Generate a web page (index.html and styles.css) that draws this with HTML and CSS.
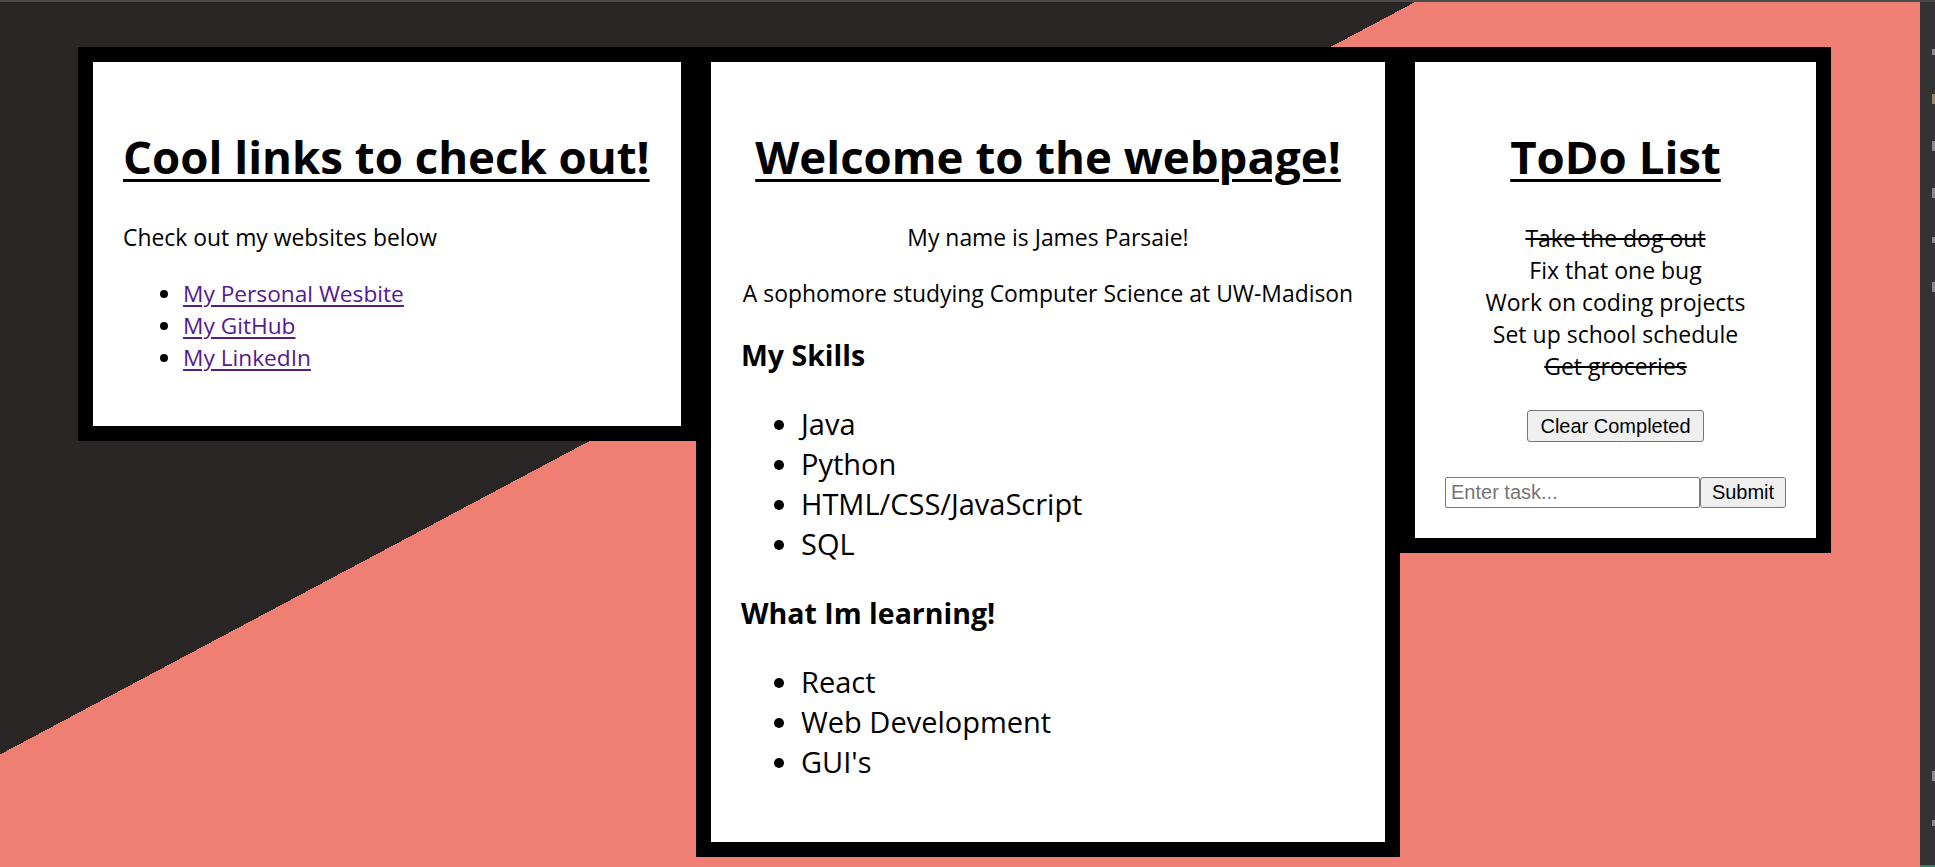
FILE: index.html
```html
<!DOCTYPE html>
<html lang="en">
<head>
<meta charset="utf-8">
<title>James Parsaie</title>
<link rel="stylesheet" href="styles.css">
</head>
<body>
<div class="topline"></div>
<div class="frame">
  <main class="stage">
    <section class="card card-links">
      <h1 class="title">Cool links to check out!</h1>
      <p class="text">Check out my websites below</p>
      <ul class="links">
        <li><a class="link" href="#">My Personal Wesbite</a></li>
        <li><a class="link" href="#">My GitHub</a></li>
        <li><a class="link" href="#">My LinkedIn</a></li>
      </ul>
    </section>

    <section class="card card-welcome">
      <h1 class="title title-center">Welcome to the webpage!</h1>
      <p class="text text-center">My name is James Parsaie!</p>
      <p class="text text-center">A sophomore studying Computer Science at UW-Madison</p>
      <h3 class="subtitle">My Skills</h3>
      <ul class="big-list">
        <li>Java</li>
        <li>Python</li>
        <li>HTML/CSS/JavaScript</li>
        <li>SQL</li>
      </ul>
      <h3 class="subtitle">What Im learning!</h3>
      <ul class="big-list">
        <li>React</li>
        <li>Web Development</li>
        <li>GUI's</li>
      </ul>
    </section>

    <section class="card card-todo">
      <h1 class="title title-center">ToDo List</h1>
      <ul class="todo-list">
        <li class="todo done">Take the dog out</li>
        <li class="todo">Fix that one bug</li>
        <li class="todo">Work on coding projects</li>
        <li class="todo">Set up school schedule</li>
        <li class="todo done">Get groceries</li>
      </ul>
      <button class="btn btn-clear" type="button">Clear Completed</button>
      <form class="add-row">
        <input class="task-input" type="text" placeholder="Enter task...">
        <button class="btn btn-submit" type="button">Submit</button>
      </form>
    </section>
  </main>
  <aside class="sidebar">
    <div class="side-top">
      <span class="side-mark side-mark-small"></span>
      <span class="side-mark side-mark-warm"></span>
      <span class="side-mark"></span>
      <span class="side-mark"></span>
      <span class="side-mark side-mark-small"></span>
      <span class="side-mark"></span>
    </div>
    <div class="side-bottom">
      <span class="side-mark"></span>
      <span class="side-mark side-mark-small"></span>
      <span class="side-bar"></span>
    </div>
  </aside>
</div>
</body>
</html>
```

FILE: styles.css
```css
html, body {
  margin: 0;
  padding: 0;
}

body {
  width: 1935px;
  height: 867px;
  overflow: hidden;
  background: #2b2626;
  font-family: "Open Sans", "Noto Sans", sans-serif;
  color: #000;
}

.topline {
  height: 2px;
  background: #4b4b4b;
}

.frame {
  display: flex;
  height: 865px;
}

.stage {
  width: 1920px;
  height: 865px;
  flex: none;
  box-sizing: border-box;
  padding: 45px 0 0 78px;
  display: flex;
  align-items: flex-start;
  background: linear-gradient(152deg, #2b2626 39.9%, #f07f73 39.9%);
}

.card {
  box-sizing: border-box;
  background: #fff;
  border: 15px solid #000;
  padding: 30px;
}

.card-links { width: 618px; }
.card-welcome { width: 704px; }
.card-todo { width: 431px; text-align: center; }

.title {
  margin: 32px 0 34px;
  font-size: 45.6px;
  line-height: 64px;
  font-weight: 700;
  text-decoration: underline;
  text-decoration-thickness: 3px;
  text-underline-offset: 5px;
  white-space: nowrap;
}

.title-center { text-align: center; }

.text {
  margin: 24px 0;
  font-size: 22.9px;
  line-height: 32px;
}

.text-center { text-align: center; }

.links {
  margin: 24px 0 22px;
  padding-left: 60px;
  font-size: 22.7px;
  line-height: 32px;
}

.link {
  color: #551a8b;
  text-decoration-thickness: 1.5px;
  text-underline-offset: 3px;
}

.subtitle {
  margin: 26px 0 30px;
  font-size: 28.5px;
  line-height: 38px;
  font-weight: 700;
}

.big-list {
  margin: 30px 0;
  padding-left: 60px;
  font-size: 29px;
  line-height: 40px;
}

.todo-list {
  list-style: none;
  margin: 0;
  padding: 0;
  font-size: 23px;
  line-height: 32px;
}

.done {
  text-decoration: line-through;
  text-decoration-thickness: 2px;
}

.btn {
  font-family: "Liberation Sans", Arial, sans-serif;
  font-size: 20px;
  color: #000;
  background: #efefef;
  border: 1px solid #767676;
  border-radius: 3px;
  height: 32px;
  padding: 0 12px;
  box-sizing: border-box;
  white-space: nowrap;
}

.btn-clear {
  display: block;
  margin: 28px auto 0;
}

.add-row {
  display: flex;
  justify-content: center;
  margin: 35px 0 0;
}

.task-input {
  width: 255px;
  height: 31px;
  box-sizing: border-box;
  margin: 0;
  padding: 0 5px;
  border: 1px solid #767676;
  border-radius: 2px;
  font-family: "Liberation Sans", Arial, sans-serif;
  font-size: 20px;
}

.task-input::placeholder {
  color: #757575;
}

.btn-submit {
  width: 86px;
  height: 31px;
  padding: 0;
}

.sidebar {
  width: 15px;
  flex: none;
  background: #333333;
  overflow: hidden;
  display: flex;
  flex-direction: column;
  justify-content: space-between;
}

.side-top {
  padding-top: 45px;
  display: flex;
  flex-direction: column;
  gap: 37px;
}

.side-bottom {
  display: flex;
  flex-direction: column;
  gap: 37px;
}

.side-mark {
  display: block;
  width: 3px;
  height: 10px;
  margin-left: 12px;
  background: #8a8a8a;
}

.side-mark-small {
  height: 6px;
  margin-top: 2px;
  margin-bottom: 2px;
}

.side-mark-warm { background: #9a8468; }

.side-bar {
  display: block;
  height: 2px;
  background: #1f8a70;
}
```
